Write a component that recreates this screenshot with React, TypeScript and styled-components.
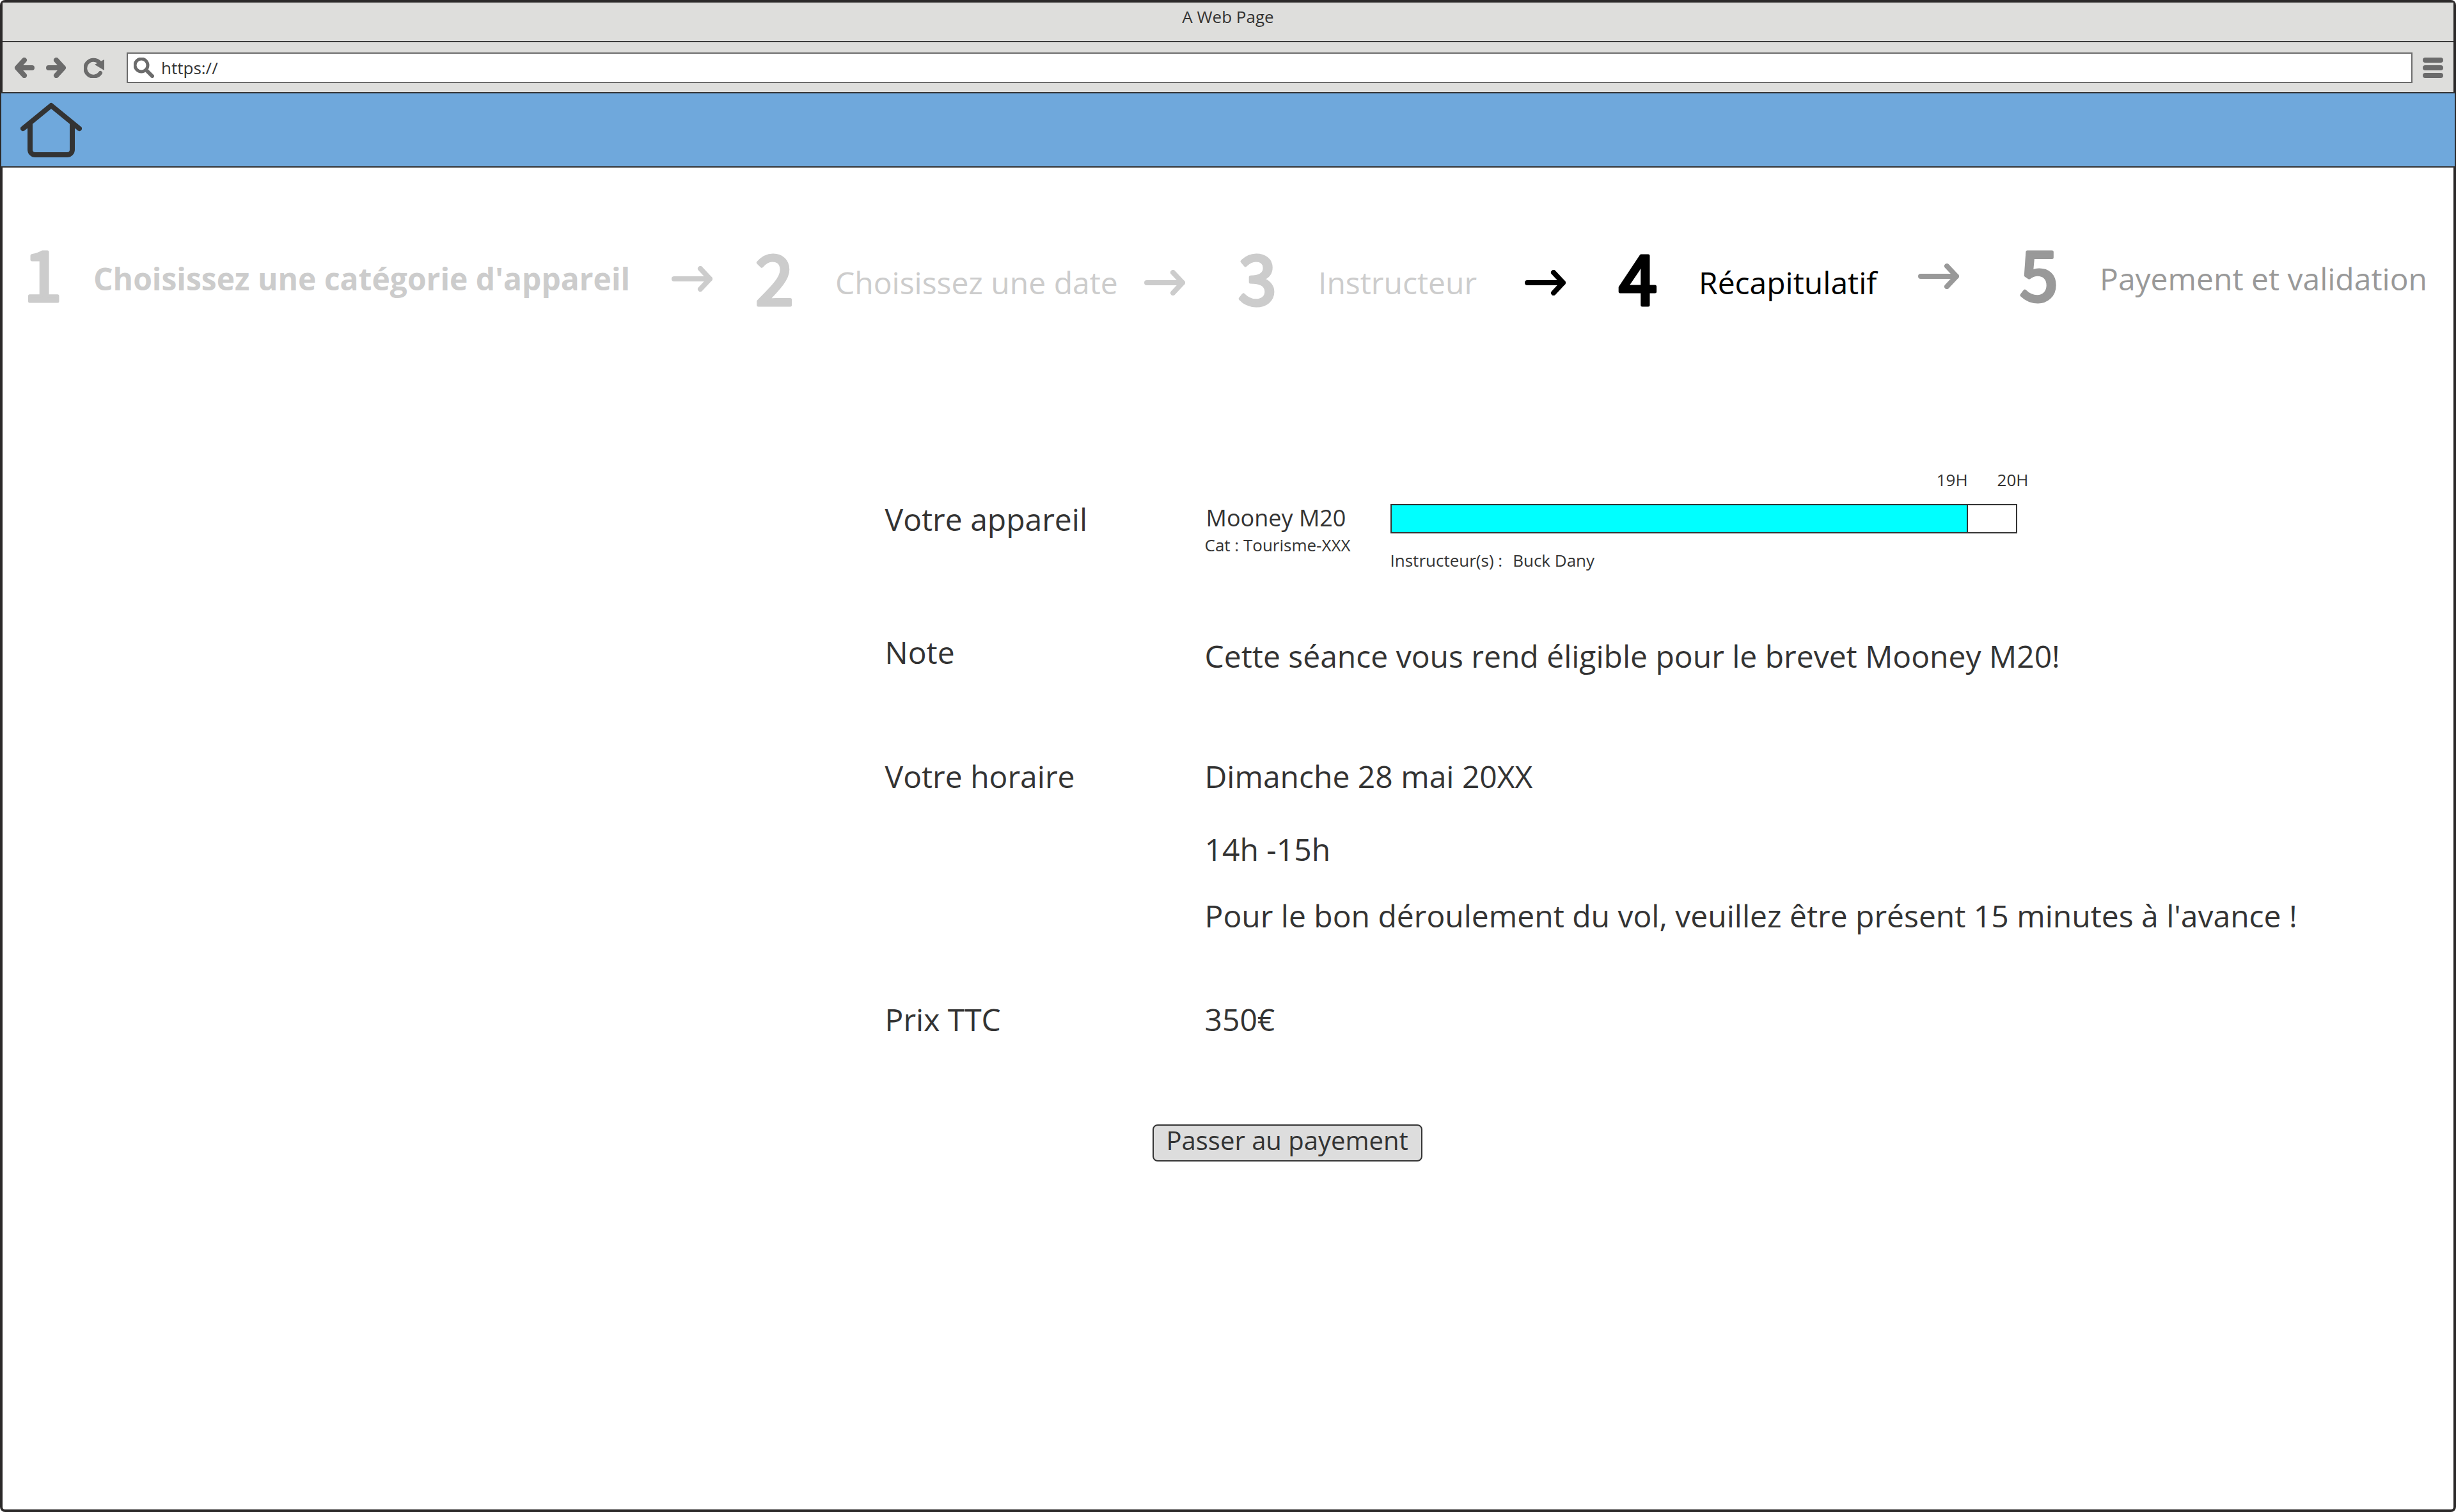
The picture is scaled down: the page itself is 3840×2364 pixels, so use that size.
import React from "react";
import styled, { createGlobalStyle } from "styled-components";

const GlobalStyle = createGlobalStyle`
  *, *::before, *::after { box-sizing: border-box; }
  body {
    margin: 0;
    background: #fff;
    color: #333;
    font-family: "Open Sans", "Noto Sans", sans-serif;
  }
`;

const Frame = styled.div`
  display: flex;
  flex-direction: column;
  min-height: 100vh;
  border: 4px solid #2b2929;
  border-radius: 8px;
  background: #fff;
`;

const TitleBar = styled.div`
  height: 62px;
  padding-top: 4px;
  border-bottom: 2px solid #3c3c3c;
  background: #dededc;
  font-size: 26px;
  line-height: 36px;
  text-align: center;
`;

const Toolbar = styled.div`
  display: flex;
  align-items: center;
  height: 78px;
  padding: 2px 16px 0 18px;
  background: #dededc;
  color: #6b6b6b;
`;

const ToolButton = styled.button<{ $after: number }>`
  display: block;
  width: 32px;
  height: 32px;
  margin: 0 ${(p) => p.$after}px 0 0;
  padding: 0;
  border: 0;
  background: none;
  color: inherit;
  cursor: pointer;
`;

const AddressBar = styled.label`
  display: flex;
  flex: 1;
  align-items: center;
  gap: 11px;
  height: 48px;
  margin-right: 16px;
  padding-left: 9px;
  border: 2px solid #6b6b6b;
  background: #fff;
`;

const AddressInput = styled.input`
  flex: 1;
  min-width: 0;
  height: 36px;
  padding: 0;
  border: 0;
  outline: 0;
  background: transparent;
  color: #333;
  font: 26px/36px "Open Sans", "Noto Sans", sans-serif;
`;

const SiteHeader = styled.header`
  display: flex;
  align-items: center;
  height: 118px;
  margin: 0 -2px;
  padding-left: 30px;
  border-top: 2px solid #333;
  border-bottom: 2px solid #333;
  background: #6fa8dc;
`;

const HomeLink = styled.a`
  display: block;
  width: 96px;
  height: 86px;
  color: #333;
`;

const Glyph = styled.svg`
  display: block;
  flex: none;
  fill: none;
  stroke: currentColor;
  stroke-linecap: round;
  stroke-linejoin: round;
`;

const Steps = styled.ol`
  display: grid;
  grid-template-columns: 1144fr 755fr 595fr 627fr 685fr;
  margin: 0;
  padding: 120px 0 0 26px;
  list-style: none;
`;

const Step = styled.li<{ $tone: string; $raised?: boolean }>`
  display: flex;
  align-items: center;
  height: 120px;
  margin-top: ${(p) => (p.$raised ? -6 : 0)}px;
  color: ${(p) => p.$tone};
`;

/* The round-joined outline softens the corners of the numerals. */
const StepNumber = styled.svg`
  flex: none;
  width: 72px;
  height: 180px;
  overflow: visible;

  text {
    fill: currentColor;
    stroke: currentColor;
    stroke-width: 5px;
    stroke-linejoin: round;
    font-family: "Noto Sans CJK JP", sans-serif;
    font-size: 108px;
    text-anchor: middle;
  }
`;

const StepLabel = styled.span<{ $gap: number; $bold?: boolean }>`
  margin-left: ${(p) => p.$gap}px;
  font-size: 48px;
  font-weight: ${(p) => (p.$bold ? 700 : 400)};
  line-height: 64px;
  white-space: nowrap;
`;

const StepArrow = styled.span<{ $tone: string; $after: number; $raised?: boolean }>`
  margin-left: auto;
  padding-right: ${(p) => p.$after}px;
  padding-bottom: ${(p) => (p.$raised ? 20 : 0)}px;
  color: ${(p) => p.$tone};
`;

const Summary = styled.main`
  padding: 230px 0 120px 36%;
`;

const Details = styled.dl`
  margin: 0;
`;

const Row = styled.div<{ $before: number }>`
  display: grid;
  grid-template-columns: 500px 1fr;
  margin-top: ${(p) => p.$before}px;
`;

const Term = styled.dt<{ $drop?: number }>`
  padding-top: ${(p) => p.$drop ?? 0}px;
  font-size: 48px;
  line-height: 64px;
`;

const Value = styled.dd<{ $drop?: number }>`
  margin: 0;
  padding-top: ${(p) => p.$drop ?? 0}px;
  font-size: 48px;
  line-height: 64px;
`;

const Line = styled.p<{ $before?: number }>`
  margin: ${(p) => p.$before ?? 0}px 0 0;
`;

const AircraftValue = styled.dd`
  display: flex;
  margin: 0;
`;

const Aircraft = styled.div`
  flex: none;
  width: 290px;
  padding-top: 54px;
`;

const AircraftName = styled.div`
  padding-left: 2px;
  font-size: 36px;
  line-height: 48px;
`;

const Small = styled.div`
  font-size: 26px;
  line-height: 36px;
`;

const Timeline = styled.div`
  flex: 0 1 998px;
`;

const Hours = styled(Small)`
  display: flex;
  justify-content: flex-end;
  gap: 46px;
`;

const Instructors = styled(Small)`
  display: flex;
  gap: 16px;
`;

const Bar = styled.div`
  display: grid;
  grid-template-columns: 905fr 75fr;
  height: 46px;
  margin: 20px 18px 24px 0;
  border: 2px solid #333;
`;

const Flown = styled.div`
  border-right: 2px solid #333;
  background: #0ff;
`;

const PayButton = styled.button`
  display: block;
  margin: 132px 0 0 418px;
  padding: 0 20px 8px;
  border: 2px solid #333;
  border-radius: 8px;
  background: #ddd;
  color: #333;
  font: 40px/46px "Open Sans", "Noto Sans", sans-serif;
  cursor: pointer;
`;

type StepData = {
  label: string;
  tone: string;
  gap: number;
  bold?: boolean;
  raised?: boolean;
  arrow?: { tone: string; after: number; raised?: boolean };
};

const steps: StepData[] = [
  { label: "Choisissez une catégorie d'appareil", tone: "#ccc", gap: 44, bold: true, raised: true, arrow: { tone: "#ccc", after: 60 } },
  { label: "Choisissez une date", tone: "#ccc", gap: 60, arrow: { tone: "#ccc", after: 76 } },
  { label: "Instructeur", tone: "#ccc", gap: 60, arrow: { tone: "#000", after: 76 } },
  { label: "Récapitulatif", tone: "#000", gap: 60, arrow: { tone: "#999", after: 88, raised: true } },
  { label: "Payement et validation", tone: "#999", gap: 60, raised: true },
];

export default function App() {
  return (
    <>
      <GlobalStyle />
      <Frame>
        <TitleBar>A Web Page</TitleBar>
        <Toolbar>
          <ToolButton type="button" aria-label="Page précédente" $after={18}>
            <Glyph width="32" height="32" viewBox="0 0 32 32" strokeWidth="8">
              <path d="M16 4 5 16l11 12M8 16h20" />
            </Glyph>
          </ToolButton>
          <ToolButton type="button" aria-label="Page suivante" $after={27}>
            <Glyph width="32" height="32" viewBox="0 0 32 32" strokeWidth="8">
              <path d="m16 4 11 12-11 12M24 16H4" />
            </Glyph>
          </ToolButton>
          <ToolButton type="button" aria-label="Recharger" $after={35}>
            <Glyph width="32" height="32" viewBox="0 0 32 32" strokeWidth="6">
              <path d="M26 24a13 13 0 1 1-2-17" />
              <path d="M32 3v17L17 11z" fill="currentColor" stroke="none" />
            </Glyph>
          </ToolButton>
          <AddressBar>
            <Glyph width="32" height="32" viewBox="0 0 32 32" strokeWidth="5" aria-hidden="true">
              <circle cx="12" cy="12" r="10" />
              <path d="m20 20 9 9" strokeWidth="6" />
            </Glyph>
            <AddressInput type="text" aria-label="Adresse" defaultValue="https://" />
          </AddressBar>
          <ToolButton type="button" aria-label="Menu" $after={0}>
            <Glyph width="32" height="32" viewBox="0 0 32 32" strokeWidth="8">
              <path d="M4 4h24M4 16h24M4 28h24" />
            </Glyph>
          </ToolButton>
        </Toolbar>
        <SiteHeader>
          <HomeLink href="#" aria-label="Accueil">
            <Glyph width="96" height="86" viewBox="0 0 96 86" strokeWidth="8">
              <path d="M4 41 48 5l44 36M15 34v40a8 8 0 0 0 8 8h50a8 8 0 0 0 8-8V34" />
            </Glyph>
          </HomeLink>
        </SiteHeader>
        <Steps>
          {steps.map((step, i) => (
            <Step key={step.label} $tone={step.tone} $raised={step.raised}>
              <StepNumber viewBox="0 0 72 180">
                <text x="37" y="125">
                  {i + 1}
                </text>
              </StepNumber>
              <StepLabel $gap={step.gap} $bold={step.bold}>
                {step.label}
              </StepLabel>
              {step.arrow && (
                <StepArrow $tone={step.arrow.tone} $after={step.arrow.after} $raised={step.arrow.raised}>
                  <Glyph width="64" height="40" viewBox="0 0 64 40" strokeWidth="8" aria-hidden="true">
                    <path d="M4 20h56M45 4l15 16-15 16" />
                  </Glyph>
                </StepArrow>
              )}
            </Step>
          ))}
        </Steps>
        <Summary>
          <Details>
            <Row $before={0}>
              <Term $drop={48}>Votre appareil</Term>
              <AircraftValue>
                <Aircraft>
                  <AircraftName>Mooney M20</AircraftName>
                  <Small>Cat : Tourisme-XXX</Small>
                </Aircraft>
                <Timeline>
                  <Hours>
                    <span>19H</span>
                    <span>20H</span>
                  </Hours>
                  <Bar>
                    <Flown />
                  </Bar>
                  <Instructors>
                    <span>Instructeur(s) :</span>
                    <span>Buck Dany</span>
                  </Instructors>
                </Timeline>
              </AircraftValue>
            </Row>
            <Row $before={94}>
              <Term>Note</Term>
              <Value $drop={6}>Cette séance vous rend éligible pour le brevet Mooney M20!</Value>
            </Row>
            <Row $before={124}>
              <Term>Votre horaire</Term>
              <Value>
                <Line>Dimanche 28 mai 20XX</Line>
                <Line $before={50}>14h -15h</Line>
                <Line $before={40}>Pour le bon déroulement du vol, veuillez être présent 15 minutes à l'avance !</Line>
              </Value>
            </Row>
            <Row $before={98}>
              <Term>Prix TTC</Term>
              <Value>350€</Value>
            </Row>
          </Details>
          <PayButton type="button">Passer au payement</PayButton>
        </Summary>
      </Frame>
    </>
  );
}
